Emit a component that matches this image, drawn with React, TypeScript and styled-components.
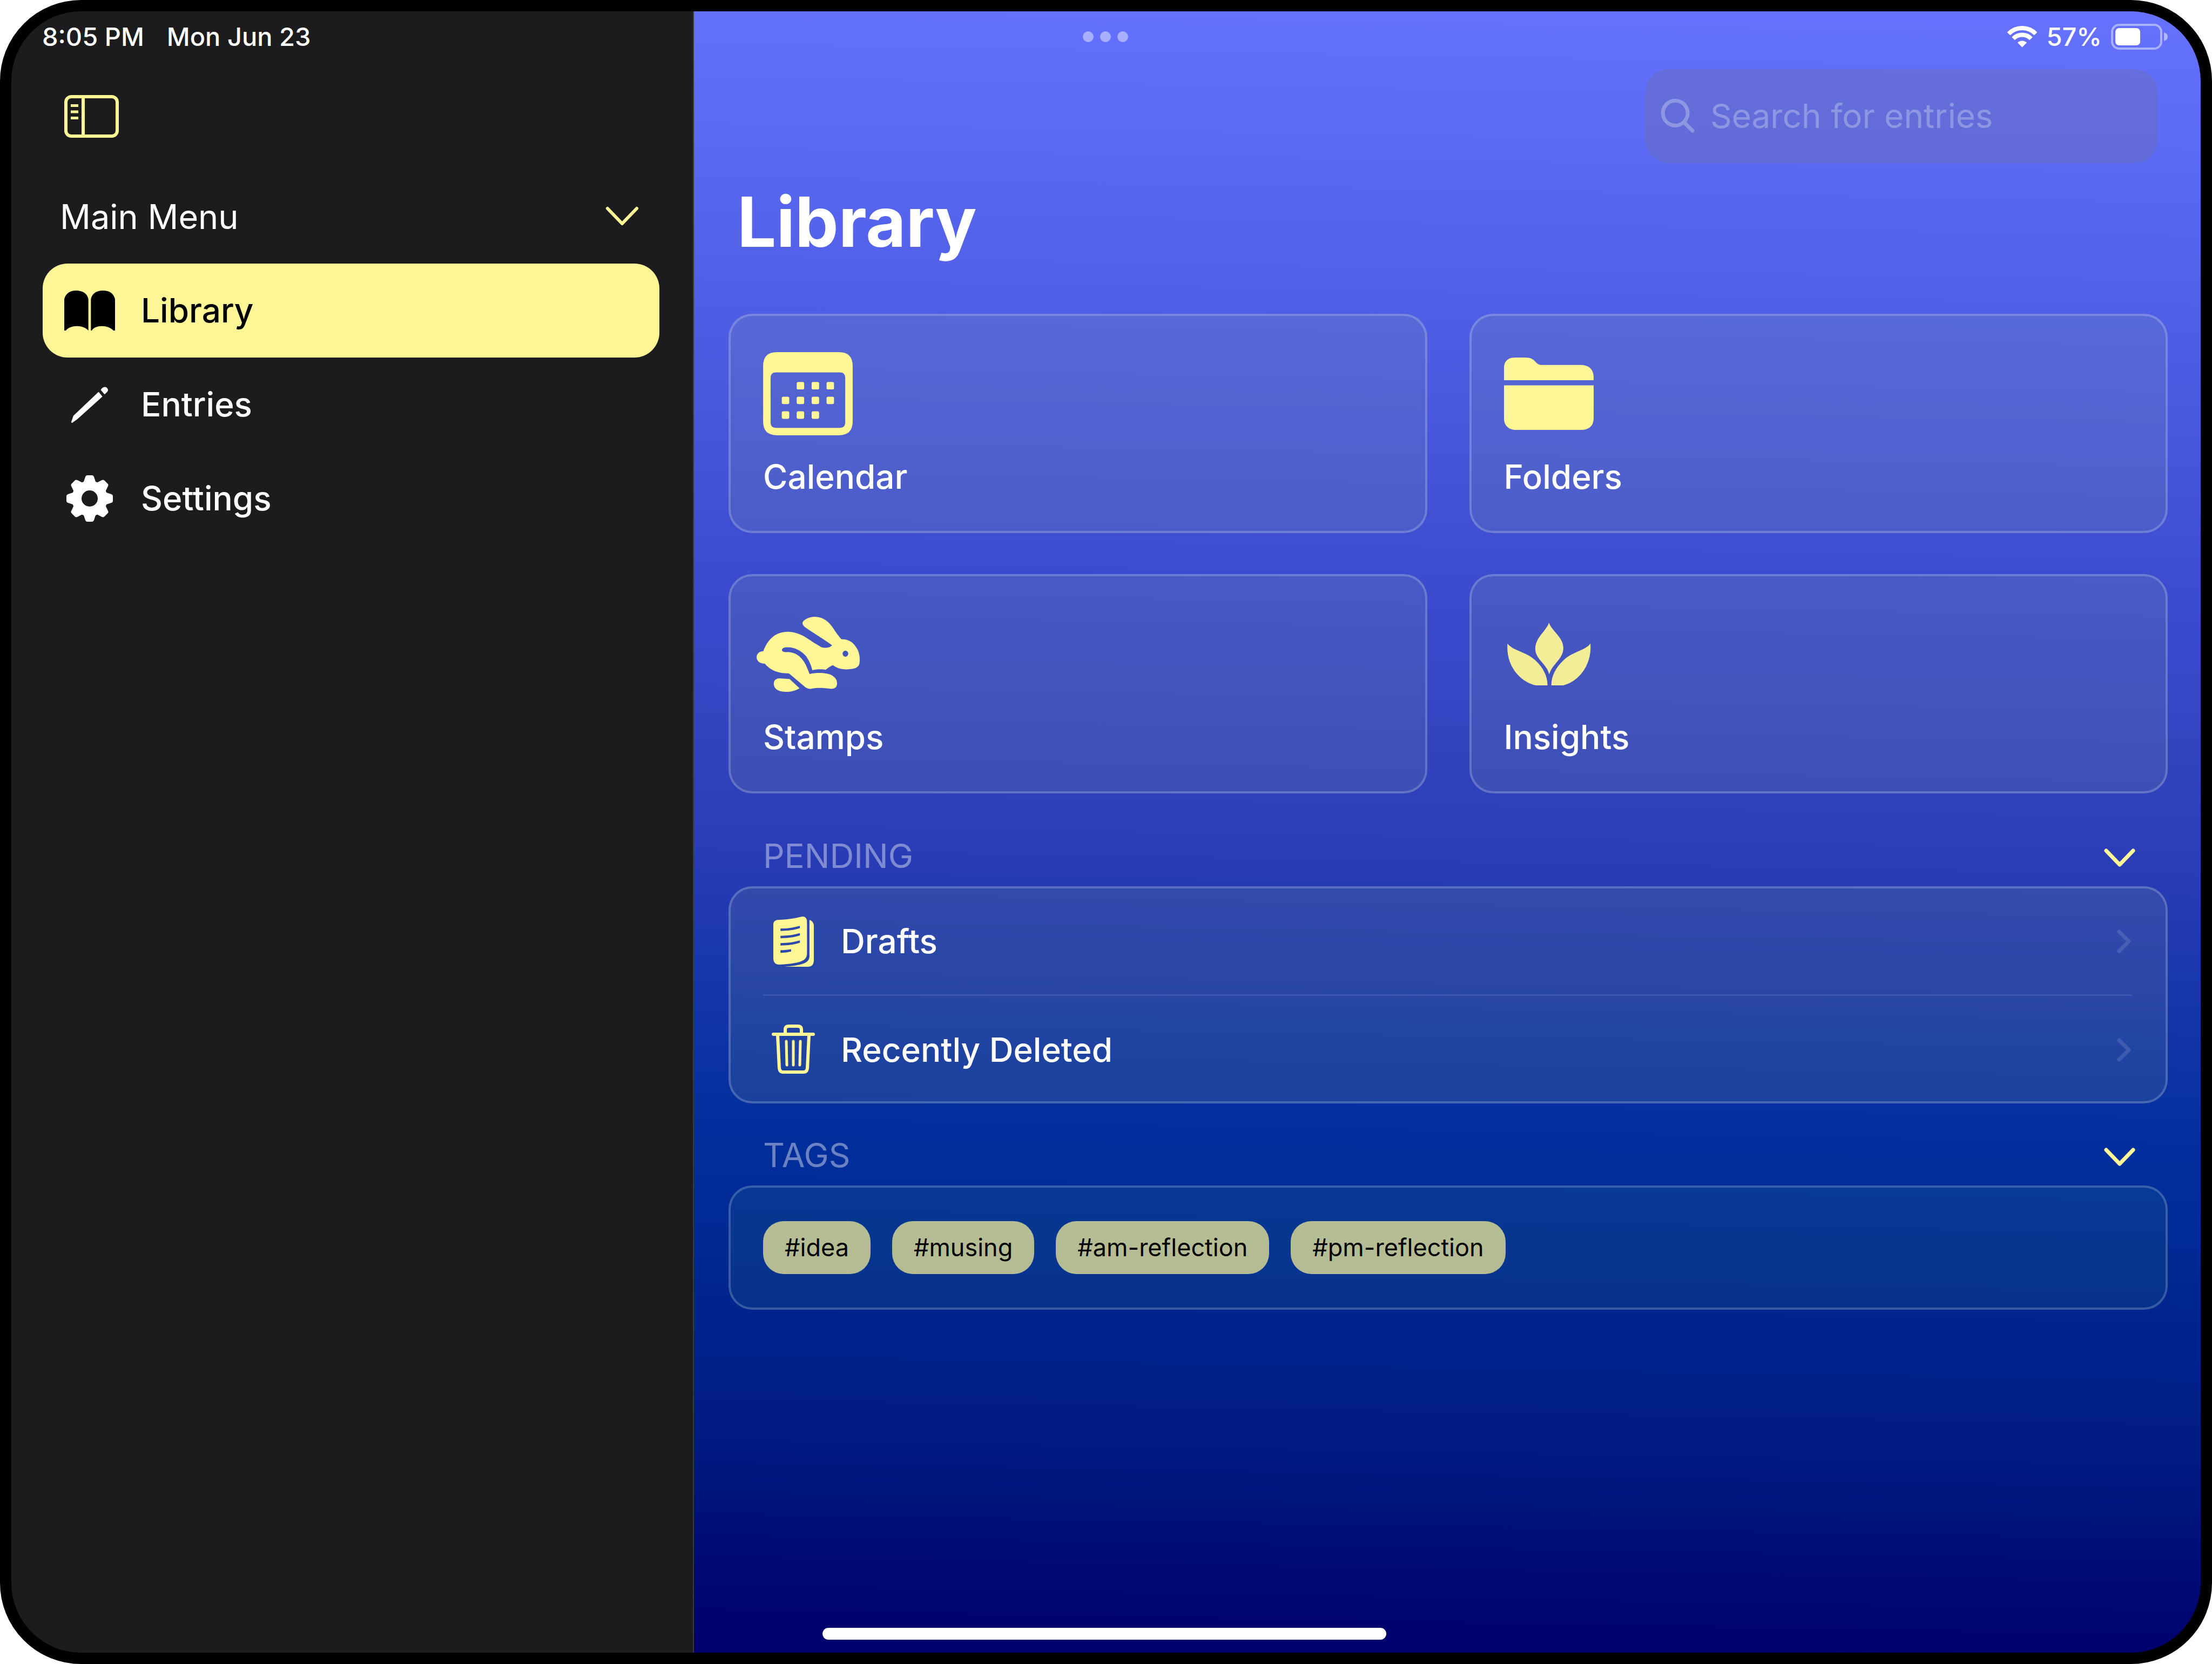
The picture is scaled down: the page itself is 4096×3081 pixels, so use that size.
import React, { useState } from "react";
import styled, { createGlobalStyle } from "styled-components";

const YELLOW = "#fff795";
const FAINT = "rgba(235, 235, 245, 0.45)";

const GlobalStyle = createGlobalStyle`
  *, *::before, *::after { box-sizing: border-box; }
  html, body { margin: 0; background: #fff; }
  body {
    font-family: Inter, "Liberation Sans", Arial, sans-serif;
    font-size: 62px;
    line-height: 76px;
    color: #fff;
  }
  button, input { font: inherit; color: inherit; }
  svg { display: block; flex: none; overflow: visible; }
`;

/* ---------- device ---------- */

const Device = styled.div`
  position: relative;
  min-height: 100vh;
  display: grid;
  grid-template-columns: 1264px minmax(0, 1fr);
  border: 21px solid #000;
  border-radius: 150px;
  background: #000;
  overflow: hidden;
`;

const StatusBar = styled.header`
  position: absolute;
  inset: 0 0 auto 0;
  height: 94px;
  padding: 0 60px 0 57px;
  display: grid;
  grid-template-columns: 1fr auto 1fr;
  align-items: center;
  font-size: 47px;
  line-height: 56px;
  font-weight: 500;
`;

const StatusGroup = styled.div<{ $end?: boolean; $gap: number }>`
  display: flex;
  align-items: center;
  justify-content: ${(p) => (p.$end ? "flex-end" : "flex-start")};
  gap: ${(p) => p.$gap}px;
  white-space: nowrap;
`;

const Dots = styled.button`
  display: flex;
  gap: 12px;
  padding: 0;
  border: 0;
  background: none;

  i {
    width: 20px;
    height: 20px;
    border-radius: 50%;
    background: rgba(255, 255, 255, 0.45);
  }
`;

const HomeArea = styled.div`
  position: absolute;
  inset: auto 0 24px 0;
  padding: 0 62px 0 56px;
  display: flex;
  justify-content: center;
  pointer-events: none;
`;

const HomeIndicator = styled.div`
  width: 1044px;
  height: 22px;
  border-radius: 11px;
  background: #fff;
`;

/* ---------- sidebar ---------- */

const Sidebar = styled.aside`
  padding: 107px 62px 0 58px;
  background: #1c1c1e;
  border-right: 2px solid #3a3a3c;
`;

const Toolbar = styled.div`
  height: 174px;
  padding: 0 40px;
  display: flex;
  align-items: center;
`;

const IconButton = styled.button`
  padding: 0;
  border: 0;
  background: none;
  color: ${YELLOW};
  cursor: pointer;
`;

const MenuHeader = styled.div`
  height: 174px;
  margin-top: 12px;
  padding: 0 38px 0 32px;
  display: flex;
  align-items: center;
  justify-content: space-between;
`;

const MenuTitle = styled.h2`
  margin: 0;
  font-size: 63px;
  font-weight: 400;
`;

const MenuLink = styled.a<{ $active?: boolean }>`
  height: 174px;
  padding: 0 40px;
  display: flex;
  align-items: center;
  gap: 48px;
  border-radius: 46px;
  font-weight: 500;
  text-decoration: none;
  color: ${(p) => (p.$active ? "#000" : "#fff")};
  background: ${(p) => (p.$active ? YELLOW : "transparent")};
`;

const IconSlot = styled.span<{ $w: number; $h?: number }>`
  flex: none;
  width: ${(p) => p.$w}px;
  height: ${(p) => (p.$h ? p.$h + "px" : "auto")};
  display: flex;
  align-items: center;
  justify-content: center;
`;

/* ---------- main ---------- */

const Main = styled.main`
  padding: 107px 61px 120px 64px;
  background: linear-gradient(
    181deg,
    #6672ff 0%,
    #5060e6 18%,
    #3e4dd0 34%,
    #2d3eb8 50%,
    #0430a0 67%,
    #002c98 72%,
    #00238c 80%,
    #001b82 87%,
    #00127a 91%,
    #00046f 97%,
    #00006e 100%
  );
`;

const SearchBox = styled.label`
  width: 950px;
  height: 174px;
  margin: 0 18px 0 auto;
  padding: 0 30px;
  display: flex;
  align-items: center;
  gap: 29px;
  border-radius: 44px;
  background: rgba(118, 118, 128, 0.24);
  color: rgba(235, 235, 245, 0.32);

  input {
    flex: 1;
    min-width: 0;
    padding: 0;
    border: 0;
    outline: 0;
    background: none;
    font-size: 62px;
  }
  input::placeholder { color: inherit; opacity: 1; }
`;

const Title = styled.h1`
  margin: 31px 0 92px;
  padding: 0 16px;
  font-size: 128px;
  line-height: 156px;
  font-weight: 700;
`;

const CardGrid = styled.div`
  display: grid;
  grid-template-columns: repeat(2, minmax(0, 1fr));
  gap: 76px 78px;
`;

const Panel = styled.div`
  border: 4px solid rgba(255, 255, 255, 0.2);
  border-radius: 44px;
  background: rgba(150, 170, 140, 0.14);
`;

const Card = styled(Panel).attrs({ as: "a" })<{ href: string }>`
  padding: 60px 60px 62px;
  display: flex;
  flex-direction: column;
  gap: 32px;
  color: #fff;
  font-weight: 500;
  text-decoration: none;
`;

const SectionHeader = styled.div<{ $top: number }>`
  height: 112px;
  margin-top: ${(p) => p.$top}px;
  padding: 0 61px 0 64px;
  display: flex;
  align-items: center;
  justify-content: space-between;
`;

const SectionTitle = styled.h2`
  margin: 0;
  font-size: 62px;
  font-weight: 400;
  color: ${FAINT};
`;

const ListPanel = styled(Panel)`
  padding: 0 62px 0 60px;
`;

const ListRow = styled.a`
  height: 196px;
  display: flex;
  align-items: center;
  gap: 32px;
  color: #fff;
  font-weight: 500;
  text-decoration: none;

  & + & {
    height: 198px;
    padding-top: 5px;
    border-top: 3px solid rgba(235, 235, 245, 0.11);
  }
  > :last-child { margin-left: auto; }
`;

const TagPanel = styled(Panel)`
  padding: 62px 60px;
  display: flex;
  flex-wrap: wrap;
  gap: 40px;
  background: rgba(60, 150, 120, 0.12);
`;

const Tag = styled.button`
  height: 98px;
  padding: 0 40px;
  border: 0;
  border-radius: 38px;
  background: rgba(255, 247, 149, 0.7);
  color: #000;
  font-size: 45px;
  line-height: 56px;
`;

/* ---------- icons ---------- */

const Chevron = ({ w = 56 }: { w?: number }) => (
  <svg width={w} height={w} viewBox="0 0 56 56" fill="none" stroke={YELLOW} strokeWidth="7" strokeLinecap="round" strokeLinejoin="round">
    <path d="M3 18 28 44 53 18" />
  </svg>
);

const MenuChevron = () => (
  <svg width="62" height="62" viewBox="0 0 62 62" fill="none" stroke={YELLOW} strokeWidth="6" strokeLinecap="round" strokeLinejoin="round">
    <path d="M4 16 31 44 58 16" />
  </svg>
);

const Disclosure = () => (
  <svg width="28" height="44" viewBox="0 0 28 44" fill="none" stroke="rgba(235,235,245,0.14)" strokeWidth="7" strokeLinecap="round" strokeLinejoin="round">
    <path d="M4 4 22 22 4 40" />
  </svg>
);

const SidebarIcon = () => (
  <svg width="101" height="79" viewBox="0 0 101 79" fill="none" stroke="currentColor" strokeWidth="6">
    <rect x="3" y="3" width="95" height="73" rx="10" />
    <path d="M35 3V76" />
    <path d="M12 19.500H26M12 31H26M12 42.500H26" strokeWidth="5" />
  </svg>
);

const BookIcon = () => (
  <svg width="94" height="74" viewBox="77 243 120 217" preserveAspectRatio="none" fill="currentColor">
    <path d="M77 290C80 260 90 243 105 243C122 243 132 262 134 290V460C128 445 118 436 107 436C96 436 86 445 81 460H77Z" />
    <path d="M140 290C142 262 152 243 168 243C185 243 194 260 197 290V460H193C187 445 177 436 166 436C155 436 146 445 142 460H140Z" />
  </svg>
);

const PencilIcon = () => (
  <svg width="68" height="67" viewBox="93 768 86 197" preserveAspectRatio="none" fill="currentColor">
    <path d="M157 796 166 822 107 945 95 965Q93 965 93 960L98 926Z" />
    <path d="M162 786C165 771 171 765 176 773C180 781 180 791 176 799L171 810Z" />
  </svg>
);

const GearIcon = () => (
  <svg width="86" height="86" viewBox="-43 -43 86 86" fill="currentColor">
    <circle r="24" fill="none" stroke="currentColor" strokeWidth="18" />
    {[0, 45, 90, 135, 180, 225, 270, 315].map((a) => (
      <path key={a} transform={`rotate(${a})`} d="M-12 -28 -8 -40Q-7 -43 -4 -43H4Q7 -43 8 -40L12 -28Z" />
    ))}
  </svg>
);

const SearchIcon = () => (
  <svg width="62" height="62" viewBox="0 0 62 62" fill="none" stroke="currentColor" strokeLinecap="round">
    <path
      d="M42 42A23 23 0 1 1 45 38.500A23 23 0 0 1 42 42L58 58"
      strokeWidth="7"
      strokeLinejoin="round"
    />
  </svg>
);

const CalendarIcon = () => (
  <svg width="166" height="154" viewBox="0 0 168 156" fill={YELLOW}>
    <path
      fillRule="evenodd"
      d="M26 0H142Q168 0 168 26V130Q168 156 142 156H26Q0 156 0 130V26Q0 0 26 0ZM24 38Q14 38 14 48V132Q14 142 24 142H144Q154 142 154 132V48Q154 38 144 38Z"
    />
    {[[1, 0], [2, 0], [3, 0], [0, 1], [1, 1], [2, 1], [3, 1], [0, 2], [1, 2], [2, 2]].map(([c, r]) => (
      <rect key={`${c}-${r}`} x={35 + c * 28} y={56 + r * 27.5} width="14" height="14" rx="3" />
    ))}
  </svg>
);

const FolderIcon = () => (
  <svg width="166" height="134" viewBox="256 330 375 406" preserveAspectRatio="none" fill={YELLOW}>
    <path d="M256 457V390C256 350 272 330 303 330H345C372 330 380 343 389 356C400 371 405 372 422 372H578C612 372 631 400 631 440V457Z" />
    <path d="M256 486H631V670C631 712 613 736 578 736H309C274 736 256 712 256 670Z" />
  </svg>
);

const RabbitIcon = () => (
  <svg width="191" height="139" viewBox="168 285 432 421" preserveAspectRatio="none" fill={YELLOW}>
    <path
      fillRule="evenodd"
      d="M360 322C362 300 390 285 413 285C440 287 462 300 485 342C500 372 512 395 523 411C550 411 570 425 583 452C598 478 602 510 599 545C597 568 580 580 545 580C520 580 500 570 488 556C478 562 468 570 458 582C440 578 420 578 401 584C398 560 388 530 375 505C355 475 325 455 300 456C285 455 274 460 274 472C276 482 285 484 300 483C325 485 345 500 360 525C375 550 382 580 390 606C420 597 455 598 478 610C500 625 505 640 505 660C505 680 495 689 480 689C455 685 430 681 395 689C380 690 372 680 365 672L304 603C260 602 230 590 202 548C180 548 168 530 168 512C168 495 178 478 196 478C210 430 235 370 300 369C340 370 370 395 405 428L440 456C455 462 475 460 484 445C470 430 440 405 400 370C380 350 362 340 360 322ZM540 475A12 17 0 1 0 540 509A12 17 0 1 0 540 475Z"
    />
    <path d="M306 634 348 686C330 700 310 706 292 706C260 706 240 690 240 660C240 640 250 630 265 630Z" />
  </svg>
);

const LeafIcon = () => (
  <svg width="154" height="116" viewBox="269 318 347 353" preserveAspectRatio="none" fill="#f3ed97">
    <path d="M443 318C455 365 503 400 503 460C503 525 455 550 444 610C435 550 386 525 386 465C386 400 432 365 443 318Z" />
    <path d="M270 435C290 475 345 480 385 528C420 572 437 620 437 671H388C330 655 262 570 270 435Z" />
    <path d="M616 435C596 475 541 480 505 528C470 572 453 620 453 671H502C556 655 624 570 616 435Z" />
  </svg>
);

const DraftsIcon = () => (
  <svg width="75" height="93" viewBox="209 497 148 263" preserveAspectRatio="none" fill={YELLOW}>
    <path
      fillRule="evenodd"
      d="M209 540C209 525 214 517 225 515C260 512 285 508 315 497C328 497 332 510 332 525V690C332 715 322 728 300 737C275 745 255 747 232 749C215 749 209 735 209 715ZM235 560C262 560 285 555 306 546V558C285 568 262 572 235 573ZM235 598C262 598 285 593 306 584V596C285 606 262 610 235 611ZM235 636C262 636 285 631 306 622V634C285 644 262 648 235 649ZM235 673C250 673 262 671 274 668V680C262 684 250 686 235 687Z"
    />
    <path d="M341 515C352 520 357 532 357 548V725C357 748 350 760 335 760H250C315 752 341 740 341 705Z" />
  </svg>
);

const TrashIcon = () => (
  <svg width="80" height="94" viewBox="0 0 80 94" fill="none" stroke={YELLOW} strokeWidth="6" strokeLinecap="round" strokeLinejoin="round">
    <path d="M3 18H77M25 17V9Q25 3 32 3H48Q55 3 55 9V17M11 20 14 81Q15 88 21 88H59Q65 88 66 81L69 20" />
    <path d="M27 31 28 75M40 31V75M53 31 52 75" strokeWidth="5" />
  </svg>
);

const WifiIcon = () => (
  <svg width="55" height="40" viewBox="0 0 55 40" fill="none" stroke="#fff" strokeWidth="8">
    <path d="M2.500 14.500A35 35 0 0 1 52.500 14.500" />
    <path d="M11 23.500A23 23 0 0 1 44 23.500" />
    <path d="M27.500 39.500 19 31A12 12 0 0 1 36 31Z" fill="#fff" stroke="none" />
  </svg>
);

const BatteryIcon = () => (
  <svg width="106" height="48" viewBox="0 0 106 48">
    <rect x="2" y="2" width="91" height="44" rx="13" fill="none" stroke="#fff" strokeOpacity="0.45" strokeWidth="4" />
    <rect x="8" y="8" width="46" height="32" rx="7" fill="#fff" />
    <path d="M98 16Q105 18 105 24T98 32Z" fill="#fff" fillOpacity="0.5" />
  </svg>
);

/* ---------- page ---------- */

const menu = [
  { label: "Library", icon: <BookIcon /> },
  { label: "Entries", icon: <PencilIcon /> },
  { label: "Settings", icon: <GearIcon /> },
];

const cards = [
  { label: "Calendar", icon: <CalendarIcon /> },
  { label: "Folders", icon: <FolderIcon /> },
  { label: "Stamps", icon: <RabbitIcon /> },
  { label: "Insights", icon: <LeafIcon /> },
];

const pending = [
  { label: "Drafts", icon: <DraftsIcon /> },
  { label: "Recently Deleted", icon: <TrashIcon /> },
];

const tags = ["#idea", "#musing", "#am-reflection", "#pm-reflection"];

export default function App() {
  const [query, setQuery] = useState("");

  return (
    <>
      <GlobalStyle />
      <Device>
        <Sidebar>
          <Toolbar>
            <IconButton aria-label="Toggle sidebar">
              <SidebarIcon />
            </IconButton>
          </Toolbar>
          <MenuHeader>
            <MenuTitle>Main Menu</MenuTitle>
            <IconButton aria-label="Collapse main menu">
              <MenuChevron />
            </IconButton>
          </MenuHeader>
          <nav>
            {menu.map((m, i) => (
              <MenuLink key={m.label} href="#" $active={i === 0}>
                <IconSlot $w={94}>{m.icon}</IconSlot>
                {m.label}
              </MenuLink>
            ))}
          </nav>
        </Sidebar>

        <Main>
          <SearchBox>
            <SearchIcon />
            <input
              type="text"
              aria-label="Search for entries"
              placeholder="Search for entries"
              value={query}
              onChange={(e) => setQuery(e.target.value)}
            />
          </SearchBox>
          <Title>Library</Title>

          <CardGrid>
            {cards.map((c) => (
              <Card key={c.label} href="#">
                <IconSlot $w={166} $h={168}>{c.icon}</IconSlot>
                <span>{c.label}</span>
              </Card>
            ))}
          </CardGrid>

          <SectionHeader $top={60}>
            <SectionTitle>PENDING</SectionTitle>
            <IconButton aria-label="Collapse pending">
              <Chevron />
            </IconButton>
          </SectionHeader>
          <ListPanel>
            {pending.map((p) => (
              <ListRow key={p.label} href="#">
                <IconSlot $w={112}>{p.icon}</IconSlot>
                <span>{p.label}</span>
                <Disclosure />
              </ListRow>
            ))}
          </ListPanel>

          <SectionHeader $top={40}>
            <SectionTitle>TAGS</SectionTitle>
            <IconButton aria-label="Collapse tags">
              <Chevron />
            </IconButton>
          </SectionHeader>
          <TagPanel>
            {tags.map((t) => (
              <Tag key={t}>{t}</Tag>
            ))}
          </TagPanel>
        </Main>

        <StatusBar>
          <StatusGroup $gap={42}>
            <span>8:05 PM</span>
            <span>Mon Jun 23</span>
          </StatusGroup>
          <Dots aria-label="Multitasking">
            <i />
            <i />
            <i />
          </Dots>
          <StatusGroup $end $gap={17}>
            <WifiIcon />
            <span>57%</span>
            <BatteryIcon />
          </StatusGroup>
        </StatusBar>
        <HomeArea>
          <HomeIndicator />
        </HomeArea>
      </Device>
    </>
  );
}
